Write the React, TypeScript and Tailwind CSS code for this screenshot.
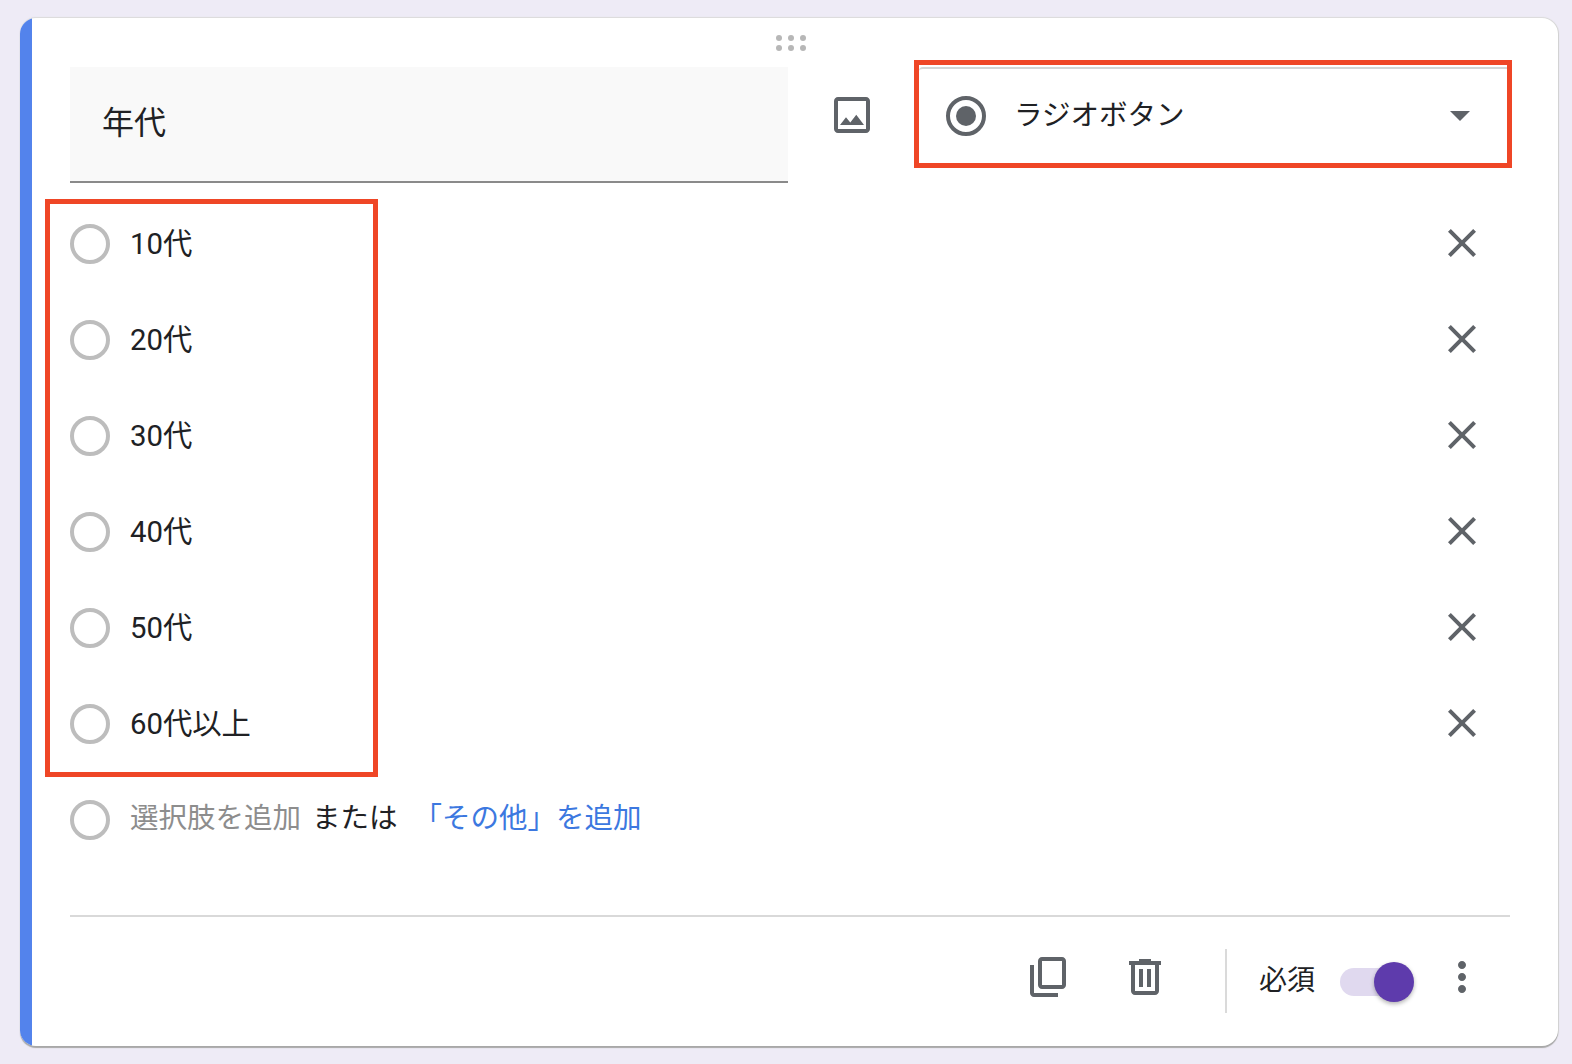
import * as React from "react";

const options = ["10代", "20代", "30代", "40代", "50代", "60代以上"];

const Icon = ({ d, className = "" }: { d: string; className?: string }) => (
  <svg viewBox="0 0 24 24" className={`w-[48px] h-[48px] shrink-0 fill-[#5f6368] ${className}`}>
    <path d={d} />
  </svg>
);

const Radio = () => (
  <div className="w-[40px] h-[40px] shrink-0 rounded-full border-[4px] border-[#bdbdbd]" />
);

const closePath =
  "M19 6.41L17.59 5 12 10.59 6.41 5 5 6.41 10.59 12 5 17.59 6.41 19 12 13.41 17.59 19 19 17.59 13.41 12z";
const imagePath =
  "M19 5v14H5V5h14m0-2H5c-1.1 0-2 .9-2 2v14c0 1.1.9 2 2 2h14c1.1 0 2-.9 2-2V5c0-1.1-.9-2-2-2zm-4.86 8.86l-3 3.87L9 13.14 6 17h12l-3.86-5.14z";
const copyPath =
  "M19 2H9c-1.1 0-2 .9-2 2v12c0 1.1.9 2 2 2h10c1.1 0 2-.9 2-2V4c0-1.1-.9-2-2-2zm0 14H9V4h10v12zM3 6v14c0 1.1.9 2 2 2h12v-2H5V6H3z";
const trashPath =
  "M15 4V3H9v1H4v2h1v13c0 1.1.9 2 2 2h10c1.1 0 2-.9 2-2V6h1V4h-5zm2 15H7V6h10v13zM9 8h2v9H9zm4 0h2v9h-2z";
const morePath =
  "M12 8c1.1 0 2-.9 2-2s-.9-2-2-2-2 .9-2 2 .9 2 2 2zm0 2c-1.1 0-2 .9-2 2s.9 2 2 2 2-.9 2-2-.9-2-2-2zm0 6c-1.1 0-2 .9-2 2s.9 2 2 2 2-.9 2-2-.9-2-2-2z";

export default function App() {
  return (
    <div className="relative w-[1572px] h-[1064px] bg-[#eeebf6] pt-[18px] pl-[20px] overflow-hidden font-['Roboto','Noto_Sans_CJK_JP',sans-serif] text-[#202124]">
      <div className="relative w-[1538px] h-[1028px] rounded-[16px] bg-white flex overflow-hidden shadow-[0_2px_1px_#a8a8a8,1px_0_1px_#d4d4d4,0_-1px_1px_#dcdcdc]">
        <div className="w-[12px] shrink-0 bg-[#5383ec]" />
        <div className="relative flex-1 pl-[38px] pr-[48px] pt-[49px]">
          {/* drag handle */}
          <div className="absolute top-[17px] left-[744px] grid grid-cols-3 gap-x-[6px] gap-y-[4px]">
            {[0, 1, 2, 3, 4, 5].map((i) => (
              <div key={i} className="w-[6px] h-[6px] rounded-full bg-[#b7b7b7]" />
            ))}
          </div>

          {/* header */}
          <div className="flex items-start">
            <div className="w-[718px] h-[116px] bg-[#f9f9f9] border-b-[2px] border-[#8a8a8a] pl-[32px] pb-[2px] flex items-center text-[32px]">
              年代
            </div>
            <Icon d={imagePath} className="ml-[40px] mt-[24px]" />
            <div className="ml-[43px] w-[591px] h-[96px] rounded-t-[4px] border-t-[2px] border-[#d5d5d5] flex items-center pl-[27px] pr-[40px]">
              <div className="w-[40px] h-[40px] rounded-full border-[4px] border-[#5f6368] flex items-center justify-center">
                <div className="w-[20px] h-[20px] rounded-full bg-[#5f6368]" />
              </div>
              <span className="ml-[28px] text-[28.5px] flex-1">ラジオボタン</span>
              <div className="w-0 h-0 border-x-[10px] border-x-transparent border-t-[10px] border-t-[#5f6368]" />
            </div>
          </div>

          {/* options */}
          <div className="mt-[13px]">
            {options.map((o) => (
              <div key={o} className="flex items-center h-[96px]">
                <Radio />
                <span className="ml-[20px] pt-[2px] text-[29.33px] flex-1">{o}</span>
                <Icon d={closePath} className="mr-[24px] -mt-[2px]" />
              </div>
            ))}
            <div className="flex items-center h-[96px] text-[28.5px]">
              <Radio />
              <div className="flex pb-[2px]">
                <span className="ml-[20px] text-[#8d8d8d]">選択肢を追加</span>
                <span className="ml-[11px]">または</span>
                <span className="ml-[16px] text-[#3c78e0]">「その他」を追加</span>
              </div>
            </div>
          </div>

          {/* footer */}
          <div className="mt-[47px] border-t-[2px] border-[#d9d9d9] h-[122px] flex items-center justify-end">
            <Icon d={copyPath} />
            <Icon d={trashPath} className="ml-[49px]" />
            <div className="ml-[56px] mt-[8px] w-[2px] h-[64px] bg-[#dadada]" />
            <span className="ml-[32px] mt-[8px] text-[28px]">必須</span>
            <div className="relative ml-[25px] mt-[10px] w-[68px] h-[28px] rounded-full bg-[#e0d9ef]">
              <div className="absolute -top-[6px] left-[34px] w-[40px] h-[40px] rounded-full bg-[#5e3bac] shadow-[0_2px_4px_rgba(0,0,0,0.3)]" />
            </div>
            <Icon d={morePath} className="ml-[30px] mr-[24px]" />
          </div>
        </div>
      </div>

      {/* red annotation boxes */}
      <div className="absolute left-[914px] top-[60px] w-[598px] h-[108px] border-[5px] border-[#ef4626]" />
      <div className="absolute left-[45px] top-[199px] w-[333px] h-[578px] border-[5px] border-[#ef4626]" />
    </div>
  );
}
